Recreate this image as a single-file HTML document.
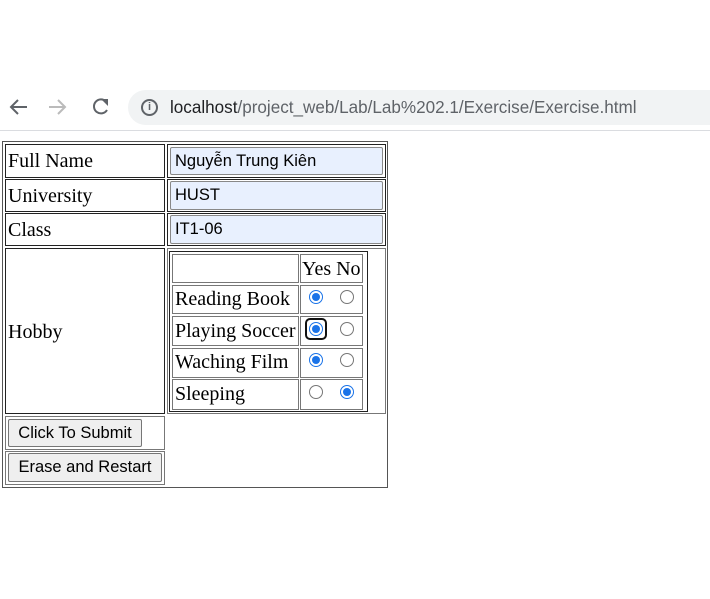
<!DOCTYPE html>
<html><head><meta charset="utf-8"><style>
body{margin:0;width:710px;height:599px;background:#fff;position:relative;overflow:hidden;font-family:"Liberation Serif",serif;}
.a{position:absolute;box-sizing:border-box;}
.c{border:1px solid #777;}
.dk{border:1px solid #222;}
.t{font-size:20px;color:#000;line-height:1;white-space:nowrap;}
.in{background:#e8f0fe;border:1px solid #888;border-radius:2px;font-family:"Liberation Sans",sans-serif;font-size:16.5px;color:#000;padding-left:4px;line-height:26px;}
.r{width:14px;height:14px;border-radius:50%;border:1px solid #767676;background:#fff;}
.r.on{border:1.5px solid #1a73e8;}
.r.on::after{content:"";position:absolute;left:1.5px;top:1.5px;width:8px;height:8px;border-radius:50%;background:#1a73e8;}
.btn{background:#efefef;border:1px solid #767676;border-radius:2px;font-family:"Liberation Sans",sans-serif;font-size:16.5px;text-align:center;line-height:26px;}
</style></head><body>
<svg class="a" style="left:8px;top:96px" width="110" height="22" viewBox="0 0 110 22">
<path d="M19 11H4M10 4l-7 7 7 7" fill="none" stroke="#5f6368" stroke-width="2"/>
<path d="M41 11h15M50 4l7 7-7 7" fill="none" stroke="#bbb" stroke-width="2"/>
<path d="M98 5.5A7 7 0 1 0 99 14" fill="none" stroke="#5f6368" stroke-width="2"/>
<path d="M93 3h7v7z" fill="#5f6368"/>
</svg>
<div class="a" style="left:128px;top:90px;width:600px;height:35px;background:#f1f3f4;border-radius:18px"></div>
<div class="a" style="left:141px;top:99px;width:17px;height:17px;border:2px solid #5f6368;border-radius:50%;font:bold 11px 'Liberation Sans';text-align:center;line-height:13px;color:#5f6368">i</div>
<div class="a" style="left:170px;top:98px;font:17.1px 'Liberation Sans',sans-serif;color:#5f6368;white-space:nowrap"><span style="color:#202124">localhost</span>/project_web/Lab/Lab%202.1/Exercise/Exercise.html</div>
<div class="a" style="left:0;top:130px;width:710px;height:1px;background:#dadce0"></div>
<div class="a dk" style="left:2px;top:141px;width:386px;height:347px;border-color:#555"></div>
<div class="a dk" style="left:5px;top:144px;width:160px;height:34px"></div>
<div class="a dk" style="left:167px;top:144px;width:219px;height:34px"></div>
<div class="a dk" style="left:5px;top:179px;width:160px;height:33px"></div>
<div class="a dk" style="left:167px;top:179px;width:219px;height:33px"></div>
<div class="a dk" style="left:5px;top:213px;width:160px;height:33px"></div>
<div class="a dk" style="left:167px;top:213px;width:219px;height:33px"></div>
<div class="a dk" style="left:5px;top:248px;width:160px;height:166px"></div>
<div class="a c" style="left:167px;top:248px;width:219px;height:166px"></div>
<div class="a c" style="left:5px;top:416px;width:160px;height:34px"></div>
<div class="a c" style="left:5px;top:451px;width:160px;height:34px"></div>
<div class="a t" style="left:8px;top:151px">Full Name</div>
<div class="a t" style="left:8px;top:186px">University</div>
<div class="a t" style="left:8px;top:220px">Class</div>
<div class="a t" style="left:8px;top:322px">Hobby</div>
<div class="a in" style="left:170px;top:147px;width:213px;height:28px">Nguyễn Trung Kiên</div>
<div class="a in" style="left:170px;top:181px;width:213px;height:29px">HUST</div>
<div class="a in" style="left:170px;top:215px;width:213px;height:29px">IT1-06</div>
<div class="a dk" style="left:169px;top:251px;width:199px;height:161px"></div>
<div class="a c" style="left:172px;top:254px;width:127px;height:29px"></div>
<div class="a c" style="left:300px;top:254px;width:63px;height:29px"></div>
<div class="a c" style="left:172px;top:285px;width:127px;height:29px"></div>
<div class="a c" style="left:300px;top:285px;width:63px;height:29px"></div>
<div class="a c" style="left:172px;top:316px;width:127px;height:30px"></div>
<div class="a c" style="left:300px;top:316px;width:63px;height:30px"></div>
<div class="a c" style="left:172px;top:348px;width:127px;height:30px"></div>
<div class="a c" style="left:300px;top:348px;width:63px;height:30px"></div>
<div class="a c" style="left:172px;top:379px;width:127px;height:31px"></div>
<div class="a c" style="left:300px;top:379px;width:63px;height:31px"></div>
<div class="a t" style="left:302px;top:259px">Yes No</div>
<div class="a t" style="left:175px;top:289px">Reading Book</div>
<div class="a t" style="left:175px;top:321px">Playing Soccer</div>
<div class="a t" style="left:175px;top:352px">Waching Film</div>
<div class="a t" style="left:175px;top:384px">Sleeping</div>
<div class="a r on" style="left:309px;top:290px"></div><div class="a r" style="left:340px;top:290px"></div>
<div class="a" style="left:305px;top:318px;width:22px;height:22px;border:2px solid #111;border-radius:5px"></div>
<div class="a r on" style="left:309px;top:322px"></div><div class="a r" style="left:340px;top:322px"></div>
<div class="a r on" style="left:309px;top:353px"></div><div class="a r" style="left:340px;top:353px"></div>
<div class="a r" style="left:309px;top:385px"></div><div class="a r on" style="left:340px;top:385px"></div>
<div class="a btn" style="left:8px;top:419px;width:134px;height:28px">Click To Submit</div>
<div class="a btn" style="left:8px;top:453px;width:154px;height:29px">Erase and Restart</div>
</body></html>
